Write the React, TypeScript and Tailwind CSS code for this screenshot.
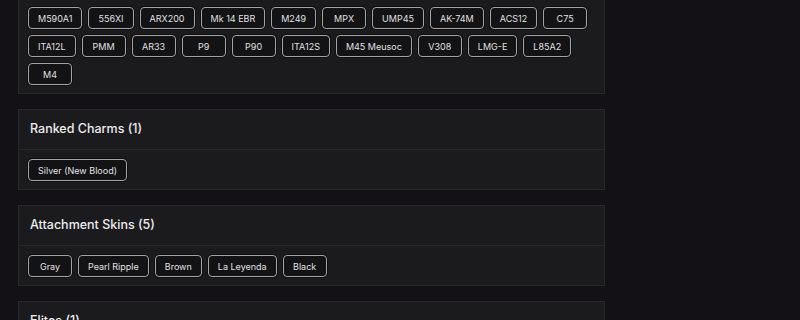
import React from "react";

const weapons = [
  "M590A1", "556XI", "ARX200", "Mk 14 EBR", "M249", "MPX", "UMP45", "AK-74M", "ACS12", "C75",
  "ITA12L", "PMM", "AR33", "P9", "P90", "ITA12S", "M45 Meusoc", "V308", "LMG-E", "L85A2",
  "M4",
];

function Tag({ label }: { label: string }) {
  return (
    <span className="flex h-[22px] min-w-[44px] items-center justify-center rounded-[4px] border border-[#a3a3a5] bg-[#131215] px-[9px] text-[9px] leading-none text-[#e0e0e2] shadow-[0_0_0_1px_rgba(0,0,0,0.45)]">
      {label}
    </span>
  );
}

function Card({ title, items }: { title: string; items: string[] }) {
  return (
    <div className="border border-[#29282c] bg-[#1b1a1d]">
      <div className="flex h-[40px] items-center border-b border-[#29282c] pl-[11px] text-[12.5px] font-medium text-[#ececee]">
        {title}
      </div>
      <div className="flex flex-wrap gap-[6px] pb-[8px] pl-[9px] pr-[9px] pt-[9px]">
        {items.map((i) => (
          <Tag key={i} label={i} />
        ))}
      </div>
    </div>
  );
}

export default function App() {
  return (
    <div
      className="h-[320px] w-[800px] overflow-hidden bg-[#131115]"
      style={{ fontFamily: "Inter, 'Noto Sans', sans-serif" }}
    >
      <div className="ml-[18px] mt-[-43px] flex w-[587px] flex-col gap-[15px]">
        <Card title="Weapons (21)" items={weapons} />
        <Card title="Ranked Charms (1)" items={["Silver (New Blood)"]} />
        <Card title="Attachment Skins (5)" items={["Gray", "Pearl Ripple", "Brown", "La Leyenda", "Black"]} />
        <Card title="Elites (1)" items={["Ela"]} />
      </div>
    </div>
  );
}
